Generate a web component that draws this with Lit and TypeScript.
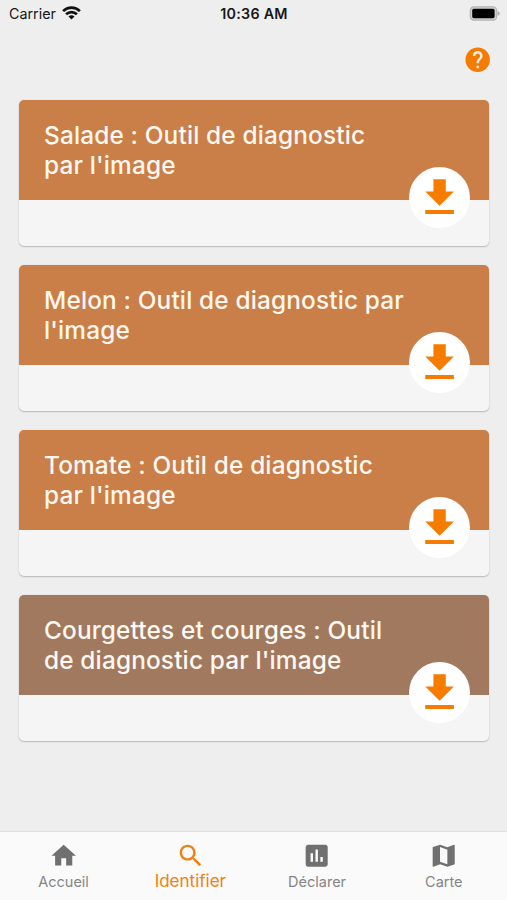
import { LitElement, html, css, svg } from "lit";
import { customElement, property } from "lit/decorators.js";
import { classMap } from "lit/directives/class-map.js";

const ICONS: Record<string, string> = {
  home: "M10 20v-6h4v6h5v-8h3L12 3 2 12h3v8z",
  search:
    "M15.5 14h-.79l-.28-.27C15.41 12.59 16 11.11 16 9.5 16 5.91 13.09 3 9.5 3S3 5.91 3 9.5 5.91 16 9.5 16c1.61 0 3.09-.59 4.23-1.57l.27.28v.79l5 4.99L20.49 19l-4.99-5zm-6 0C7.01 14 5 11.99 5 9.5S7.01 5 9.5 5 14 7.01 14 9.5 11.99 14 9.5 14z",
  chart:
    "M19 3H5c-1.1 0-2 .9-2 2v14c0 1.1.9 2 2 2h14c1.1 0 2-.9 2-2V5c0-1.1-.9-2-2-2zM9 17H7v-7h2v7zm4 0h-2V7h2v10zm4 0h-2v-4h2v4z",
  map: "M20.5 3l-.16.03L15 5.1 9 3 3.36 4.9c-.21.07-.36.25-.36.48V20.5c0 .28.22.5.5.5l.16-.03L9 18.9l6 2.1 5.64-1.9c.21-.07.36-.25.36-.48V3.5c0-.28-.22-.5-.5-.5zM15 19l-6-2.11V5l6 2.11V19z",
  download: "M19 9h-4V3H9v6H5l7 7 7-7zM5 18v2h14v-2H5z",
  help: "M12 2C6.48 2 2 6.48 2 12s4.48 10 10 10 10-4.48 10-10S17.52 2 12 2zm1 17h-2v-2h2v2zm2.07-7.75l-.9.92C13.45 12.9 13 13.5 13 15h-2v-.5c0-1.1.45-2.1 1.17-2.83l1.24-1.26c.37-.36.59-.86.59-1.41 0-1.1-.9-2-2-2s-2 .9-2 2H8c0-2.21 1.79-4 4-4s4 1.79 4 4c0 .88-.36 1.68-.93 2.25z",
};

@customElement("app-icon")
class AppIcon extends LitElement {
  static styles = css`
    :host { display: block; width: 29.4px; height: 29.4px; }
    .glyph { display: block; width: 100%; height: 100%; fill: currentColor; }
  `;
  @property() name = "home";
  render() {
    return html`<svg class="glyph" viewBox="0 0 24 24">${svg`<path d=${ICONS[this.name]}></path>`}</svg>`;
  }
}

@customElement("status-bar")
class StatusBar extends LitElement {
  static styles = css`
    :host {
      display: grid; grid-template-columns: 1fr auto 1fr; align-items: center;
      height: 28px; padding: 0 7px 1px 9px; box-sizing: border-box;
      font-size: 14px; color: #161616;
    }
    .carrier { display: flex; align-items: center; gap: 6px; font-size: 14.3px; }
    .wifi { display: block; width: 19px; height: 14px; margin-top: -1px; }
    .time { font-weight: 600; font-size: 14.3px; letter-spacing: 0.25px; margin-right: 1px; }
    .battery { justify-self: end; width: 31px; height: 15px; margin-top: -1px; }
  `;
  render() {
    return html`
      <div class="carrier">
        <span>Carrier</span>
        <svg class="wifi" viewBox="0 0 19 14" fill="none" stroke="#111" stroke-width="2.7">
          <path d="M1.1 5.1a12 12 0 0 1 16.8 0"></path>
          <path d="M4.1 8.3a7.7 7.7 0 0 1 10.8 0"></path>
          <path d="M9.5 13.6L6.5 10.6a4.2 4.2 0 0 1 6 0z" fill="#111" stroke="none"></path>
        </svg>
      </div>
      <span class="time">10:36 AM</span>
      <svg class="battery" viewBox="0 0 31 15">
        <rect x="1.3" y="0.9" width="26.4" height="13.2" rx="3.7" fill="#d0d0d0" stroke="#b4b4b4" stroke-width="1.2"></rect>
        <rect x="3.2" y="2.8" width="22.4" height="9.4" rx="1.6" fill="#000"></rect>
        <path d="M28.6 5.2q2 .6 2 2.3t-2 2.3z" fill="#aaa"></path>
      </svg>
    `;
  }
}

@customElement("tool-card")
class ToolCard extends LitElement {
  static styles = css`
    :host {
      display: block; position: relative; height: 146.5px; border-radius: 5px;
      background: #f5f5f5;
      box-shadow: 0 1px 1.5px rgba(0, 0, 0, 0.22), 0 0 1px rgba(0, 0, 0, 0.12);
    }
    .head {
      height: 100.2px; box-sizing: border-box; padding: 21.7px 80px 0 25px;
      border-radius: 5px 5px 0 0; background: #ca7e48; color: #fff8f0;
      font-size: 24.4px; line-height: 29.4px; font-weight: 500;
      letter-spacing: 0.15px; font-feature-settings: "calt" 0;
    }
    .muted { background: #a1795f; }
    .line { display: block; white-space: nowrap; }
    .action {
      position: absolute; right: 19px; top: 67.2px; width: 61px; height: 61px;
      border-radius: 50%; background: #fff; color: #f57c00;
      display: flex; align-items: center; justify-content: center;
    }
    .icon { width: 49.2px; height: 49.2px; }
  `;
  @property({ attribute: false }) lines: string[] = [];
  @property({ type: Boolean }) muted = false;
  render() {
    return html`
      <div class=${classMap({ head: true, muted: this.muted })}>
        ${this.lines.map((l) => html`<span class="line">${l}</span>`)}
      </div>
      <div class="action"><app-icon class="icon" name="download"></app-icon></div>
    `;
  }
}

const CARDS = [
  { lines: ["Salade : Outil de diagnostic", "par l'image"], muted: false },
  { lines: ["Melon : Outil de diagnostic par", "l'image"], muted: false },
  { lines: ["Tomate : Outil de diagnostic", "par l'image"], muted: false },
  { lines: ["Courgettes et courges : Outil", "de diagnostic par l'image"], muted: true },
];

const TABS = [
  { icon: "home", label: "Accueil", active: false },
  { icon: "search", label: "Identifier", active: true },
  { icon: "chart", label: "Déclarer", active: false },
  { icon: "map", label: "Carte", active: false },
];

@customElement("app-root")
class AppRoot extends LitElement {
  static styles = css`
    :host {
      display: flex; flex-direction: column; height: 900px; overflow: hidden;
      background: #eeeeee; font-family: Inter, "Liberation Sans", sans-serif;
    }
    .toolbar { display: flex; justify-content: flex-end; padding: 17px 14.8px 0 0; color: #f57c00; height: 54.8px; }
    .list { flex: 1; display: flex; flex-direction: column; gap: 18.5px; padding: 0 18px 0 19px; }
    .tabs {
      display: grid; grid-template-columns: repeat(4, 1fr); height: 68px;
      background: #fafafa; box-shadow: 0 -1px 1px rgba(0, 0, 0, 0.05);
    }
    .tab { display: flex; flex-direction: column; align-items: center; padding: 9px 0 0 0.4px; color: #707070; }
    .label { font-size: 14.5px; line-height: 18px; margin-top: 3px; color: #858585; }
    .active, .active .label { color: #f0800f; }
    .active .label { font-size: 17px; margin-top: 2px; }
  `;
  render() {
    return html`
      <status-bar></status-bar>
      <div class="toolbar"><app-icon name="help"></app-icon></div>
      <main class="list">
        ${CARDS.map((c) => html`<tool-card .lines=${c.lines} ?muted=${c.muted}></tool-card>`)}
      </main>
      <nav class="tabs">
        ${TABS.map(
          (t) => html`<div class=${classMap({ tab: true, active: t.active })}>
            <app-icon name=${t.icon}></app-icon><span class="label">${t.label}</span>
          </div>`
        )}
      </nav>
    `;
  }
}
